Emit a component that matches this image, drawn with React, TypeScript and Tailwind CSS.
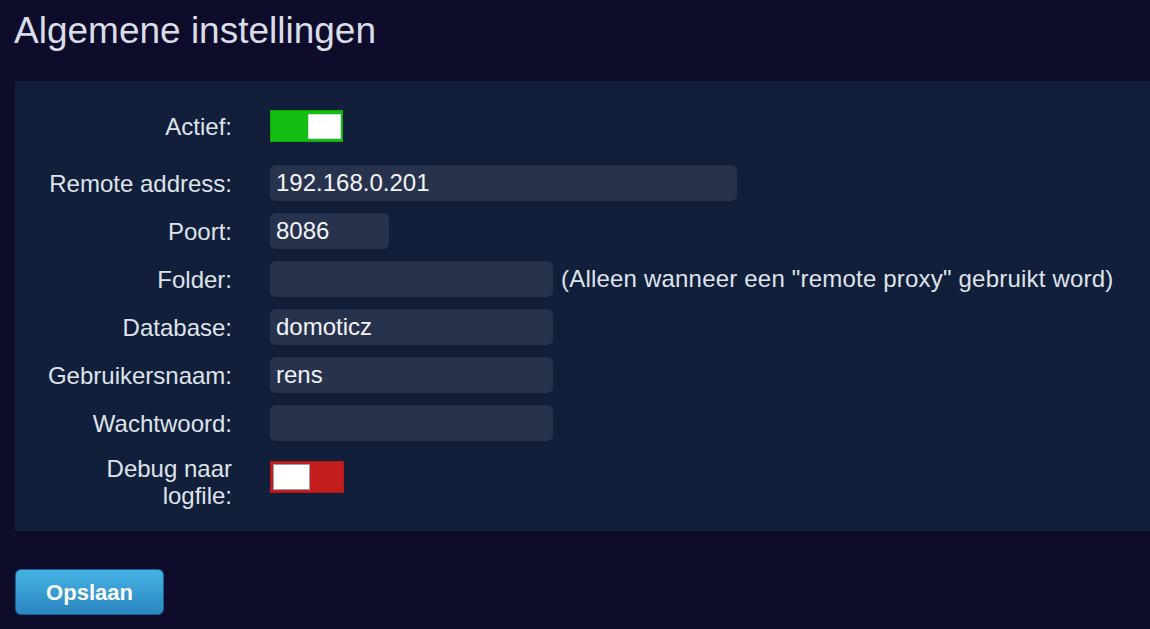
const font = { fontFamily: '"Liberation Sans", Arial, sans-serif' };

type Field = { label: string; value: string; width: string; note?: string };

const fields: Field[] = [
  { label: "Remote address:", value: "192.168.0.201", width: "w-[467px]" },
  { label: "Poort:", value: "8086", width: "w-[119px]" },
  {
    label: "Folder:",
    value: "",
    width: "w-[283px]",
    note: '(Alleen wanneer een "remote proxy" gebruikt word)',
  },
  { label: "Database:", value: "domoticz", width: "w-[283px]" },
  { label: "Gebruikersnaam:", value: "rens", width: "w-[283px]" },
  { label: "Wachtwoord:", value: "", width: "w-[283px]" },
];

const Label = ({ children }: { children: React.ReactNode }) => (
  <div className="ml-[25px] w-[192px] shrink-0 text-right text-[24px] leading-[27px] text-[#dfe3ea]">
    {children}
  </div>
);

const Toggle = ({ on }: { on: boolean }) =>
  on ? (
    <div className="flex h-[32px] w-[73px] items-center justify-end border border-[#0ea70e] bg-[#13bf13] pr-[1px]">
      <div className="h-[25px] w-[33px] border border-[#d6dcd6] bg-white" />
    </div>
  ) : (
    <div className="flex h-[32px] w-[74px] items-center justify-start border border-[#b01818] bg-[#c41d1d] pl-[2px]">
      <div className="h-[26px] w-[37px] border border-[#9aa0a8] bg-white" />
    </div>
  );

export default function App() {
  return (
    <div className="min-h-screen bg-[#0e0c2b] pt-[9px]" style={font}>
      <h1 className="pl-[14px] text-[37px] leading-[44px] text-[#d9dde5]">Algemene instellingen</h1>

      <div className="ml-[15px] mt-[28px] flex flex-col bg-[#111f3b] pb-[22px] pt-[29px]">
        <div className="flex h-[32px] items-center gap-[38px]">
          <Label>Actief:</Label>
          <Toggle on />
        </div>

        <div className="mt-[23px] flex flex-col gap-[12px]">
          {fields.map((f) => (
            <div key={f.label} className="flex h-[36px] items-center">
              <Label>{f.label}</Label>
              <div
                className={`ml-[38px] flex h-[36px] items-center rounded-[6px] bg-[#27334c] px-[6px] text-[24px] text-[#f2f4f7] ${f.width}`}
              >
                {f.value}
              </div>
              {f.note && (
                <span className="ml-[8px] text-[24px] tracking-[0.2px] text-[#dfe3ea]">{f.note}</span>
              )}
            </div>
          ))}
        </div>

        <div className="mt-[14px] flex items-start gap-[38px]">
          <Label>
            Debug naar
            <br />
            logfile:
          </Label>
          <div className="mt-[6px]">
            <Toggle on={false} />
          </div>
        </div>
      </div>

      <button className="ml-[15px] mt-[38px] h-[46px] w-[149px] rounded-[6px] border border-[#1d5f8c] bg-gradient-to-b from-[#46b3e3] to-[#2a86c1] text-[22px] font-bold text-white">
        Opslaan
      </button>
    </div>
  );
}
